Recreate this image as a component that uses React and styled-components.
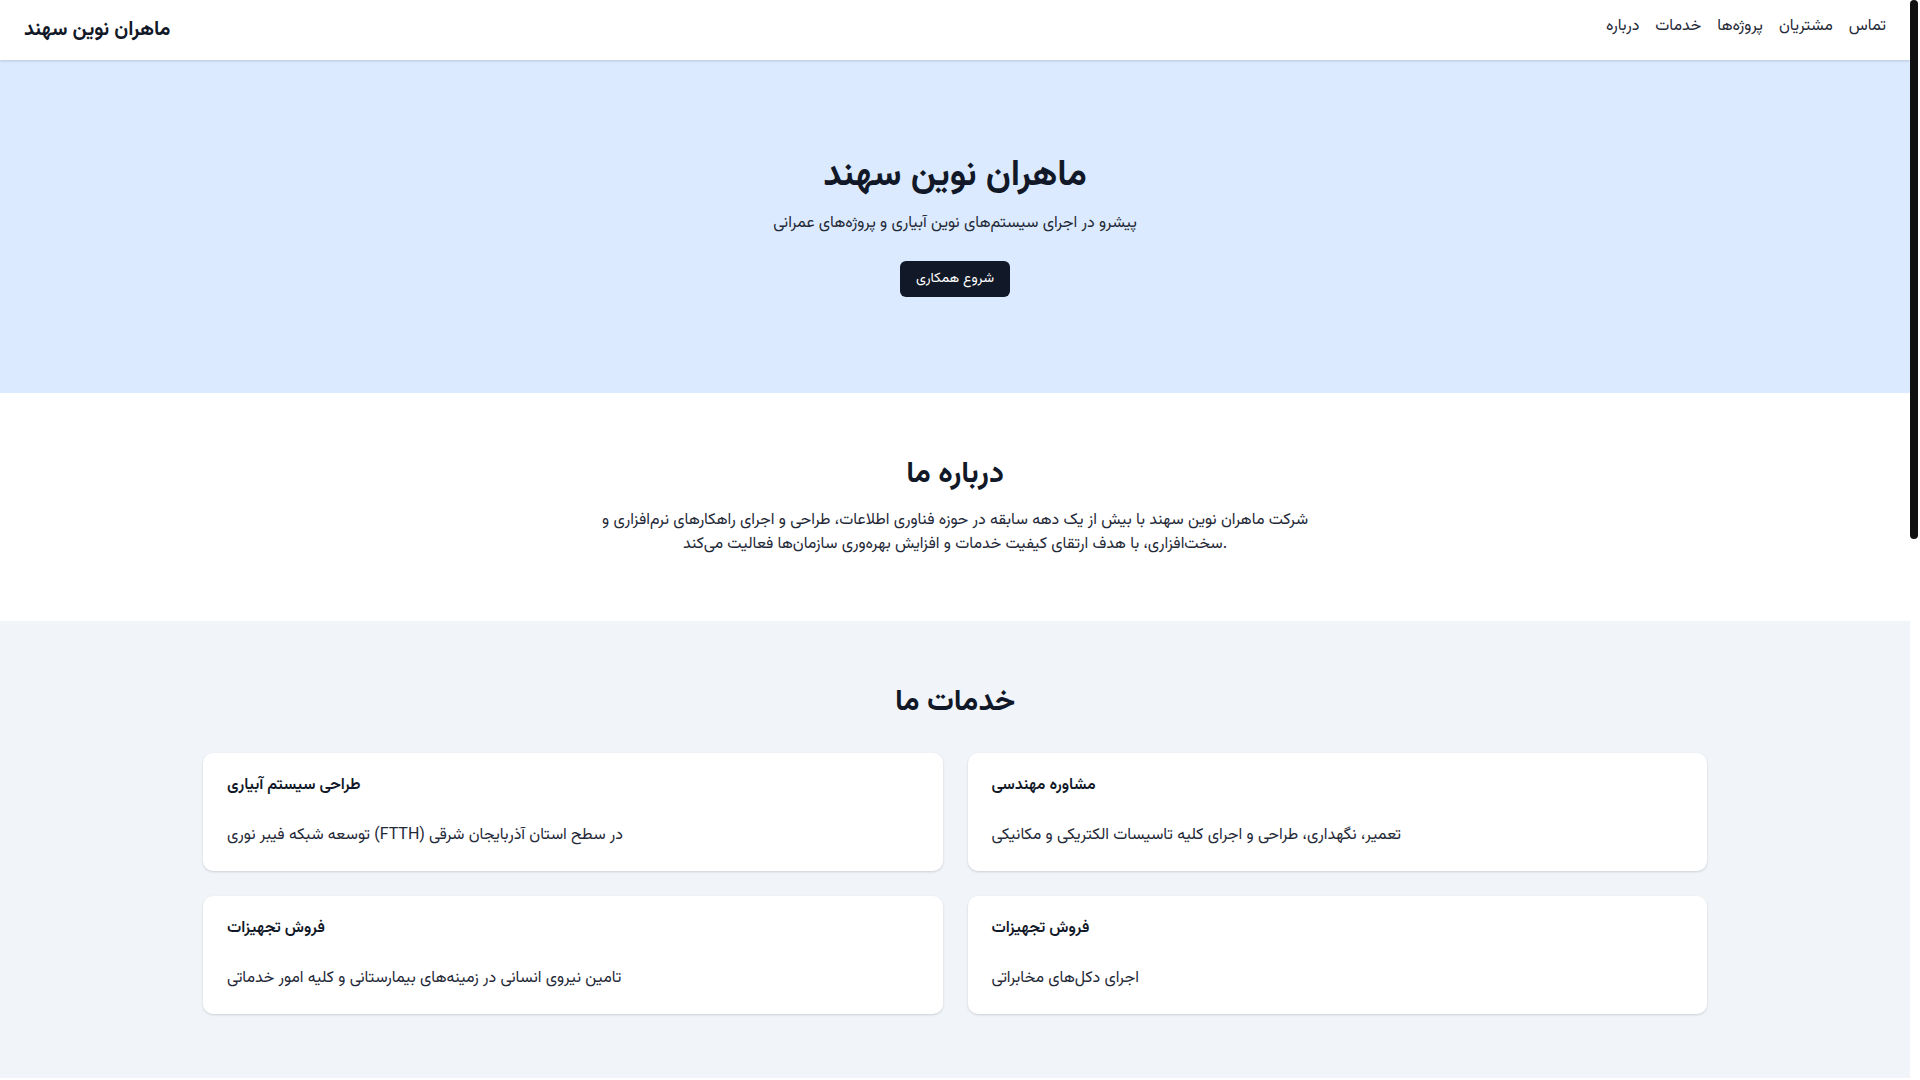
import React from "react";
import styled, { createGlobalStyle } from "styled-components";

const GlobalStyle = createGlobalStyle`
  * {
    box-sizing: border-box;
  }
  body {
    margin: 0;
    font-family: "Vazirmatn", "Noto Sans", sans-serif;
    color: #111827;
    background: #ffffff;
  }
  h1, h2, h3, p {
    margin: 0;
  }
`;

// room for the scrollbar on the right, like the browser keeps
const Page = styled.div`
  min-height: 100vh;
  margin-right: 10px;
`;

const ScrollThumb = styled.div`
  position: fixed;
  top: 0;
  right: 2px;
  width: 8px;
  height: 539px;
  border-radius: 4px;
  background: #111111;
  z-index: 10;
`;

const NavBar = styled.nav`
  height: 60px;
  padding: 0 24px;
  display: flex;
  align-items: center;
  justify-content: space-between;
  background: #ffffff;
  box-shadow: 0 1px 3px rgba(0, 0, 0, 0.1), 0 1px 2px rgba(0, 0, 0, 0.06);
  position: relative;
  z-index: 2;
`;

const Logo = styled.div`
  font-size: 20px;
  line-height: 28px;
  font-weight: 700;
`;

const NavLinks = styled.div`
  display: flex;
  gap: 16px;
  padding-bottom: 6px;
`;

const NavLink = styled.a`
  font-size: 16px;
  line-height: 24px;
  color: #1f2937;
  text-decoration: none;
`;

const Hero = styled.section`
  background: #dbeafe;
  padding: 96px 24px;
  text-align: center;
`;

const HeroTitle = styled.h1`
  font-size: 36px;
  line-height: 40px;
  font-weight: 700;
  margin-bottom: 14px;
`;

const HeroSub = styled.p`
  font-size: 16px;
  line-height: 28px;
  color: #1f2937;
  margin-bottom: 23px;
`;

const Button = styled.button`
  height: 36px;
  padding: 0 16px;
  border: none;
  border-radius: 6px;
  background: #111827;
  color: #ffffff;
  font-family: inherit;
  font-size: 14px;
  cursor: pointer;
`;

const Section = styled.section`
  background: ${(p) => (p.$tint ? "#f1f5f9" : "#ffffff")};
  padding: 64px 16px;
  text-align: center;
`;

const SectionTitle = styled.h2`
  font-size: 30px;
  line-height: 36px;
  font-weight: 700;
  margin-bottom: ${(p) => p.$gap || 16}px;
`;

const AboutText = styled.p`
  max-width: 768px;
  margin: 0 auto;
  font-size: 16px;
  line-height: 24px;
  color: #1f2937;
`;

const Container = styled.div`
  max-width: 1504px;
  margin: 0 auto;
`;

const CardGrid = styled.div`
  display: grid;
  grid-template-columns: repeat(${(p) => p.$cols || 2}, 1fr);
  gap: 25px;
  text-align: left;
`;

const Card = styled.div`
  background: #ffffff;
  border-radius: 10px;
  padding: 21px 24px 23px;
  box-shadow: 0 1px 3px rgba(0, 0, 0, 0.1), 0 1px 2px rgba(0, 0, 0, 0.06);
`;

const CardTitle = styled.h3`
  font-size: 16px;
  line-height: 24px;
  font-weight: 600;
  margin-bottom: 26px;
`;

const CardText = styled.p`
  font-size: 16px;
  line-height: 24px;
  color: #1f2937;
`;

const ClientRow = styled.div`
  display: flex;
  justify-content: center;
  gap: 48px;
  flex-wrap: wrap;
`;

const Client = styled.div`
  width: 200px;
  height: 80px;
  border-radius: 10px;
  background: #ffffff;
  display: flex;
  align-items: center;
  justify-content: center;
  font-size: 16px;
  color: #374151;
  box-shadow: 0 1px 3px rgba(0, 0, 0, 0.1);
`;

const ContactList = styled.div`
  display: flex;
  flex-direction: column;
  gap: 8px;
  font-size: 16px;
  line-height: 24px;
  color: #1f2937;
`;

const Footer = styled.footer`
  background: #111827;
  color: #e5e7eb;
  text-align: center;
  padding: 24px;
  font-size: 14px;
`;

const links = ["درباره", "خدمات", "پروژه‌ها", "مشتریان", "تماس"];

const services = [
  {
    title: "طراحی سیستم آبیاری",
    text: "توسعه شبکه فیبر نوری (FTTH) در سطح استان آذربایجان شرقی",
  },
  {
    title: "مشاوره مهندسی",
    text: "تعمیر، نگهداری، طراحی و اجرای کلیه تاسیسات الکتریکی و مکانیکی",
  },
  {
    title: "فروش تجهیزات",
    text: "تامین نیروی انسانی در زمینه‌های بیمارستانی و کلیه امور خدماتی",
  },
  {
    title: "فروش تجهیزات",
    text: "اجرای دکل‌های مخابراتی",
  },
];

const projects = [
  { title: "پروژه آبیاری قطره‌ای", text: "اجرای سیستم آبیاری نوین در مزارع استان" },
  { title: "پروژه فیبر نوری", text: "توسعه شبکه فیبر نوری در سطح شهر تبریز" },
  { title: "پروژه عمرانی", text: "احداث و بهسازی تاسیسات شهری" },
];

const clients = ["شرکت آب منطقه‌ای", "شرکت مخابرات", "دانشگاه علوم پزشکی", "شهرداری تبریز"];

export default function App() {
  return (
    <Page>
      <GlobalStyle />
      <ScrollThumb />
      <NavBar>
        <Logo>ماهران نوین سهند</Logo>
        <NavLinks>
          {links.map((l) => (
            <NavLink key={l} href="#">
              {l}
            </NavLink>
          ))}
        </NavLinks>
      </NavBar>

      <Hero>
        <HeroTitle>ماهران نوین سهند</HeroTitle>
        <HeroSub>پیشرو در اجرای سیستم‌های نوین آبیاری و پروژه‌های عمرانی</HeroSub>
        <Button>شروع همکاری</Button>
      </Hero>

      <Section>
        <SectionTitle>درباره ما</SectionTitle>
        <AboutText>
          شرکت ماهران نوین سهند با بیش از یک دهه سابقه در حوزه فناوری اطلاعات، طراحی و اجرای
          راهکارهای نرم‌افزاری و سخت‌افزاری، با هدف ارتقای کیفیت خدمات و افزایش بهره‌وری سازمان‌ها
          فعالیت می‌کند.
        </AboutText>
      </Section>

      <Section $tint>
        <SectionTitle $gap={32}>خدمات ما</SectionTitle>
        <Container>
          <CardGrid>
            {services.map((s, i) => (
              <Card key={i}>
                <CardTitle>{s.title}</CardTitle>
                <CardText>{s.text}</CardText>
              </Card>
            ))}
          </CardGrid>
        </Container>
      </Section>

      <Section>
        <SectionTitle $gap={32}>پروژه‌ها</SectionTitle>
        <Container>
          <CardGrid $cols={3}>
            {projects.map((p) => (
              <Card key={p.title}>
                <CardTitle>{p.title}</CardTitle>
                <CardText>{p.text}</CardText>
              </Card>
            ))}
          </CardGrid>
        </Container>
      </Section>

      <Section $tint>
        <SectionTitle $gap={32}>مشتریان</SectionTitle>
        <ClientRow>
          {clients.map((c) => (
            <Client key={c}>{c}</Client>
          ))}
        </ClientRow>
      </Section>

      <Section>
        <SectionTitle $gap={24}>تماس</SectionTitle>
        <ContactList>
          <span>تبریز، آذربایجان شرقی</span>
          <span>info@mahrannovin.ir</span>
          <span>۰۴۱-۳۳۰۰۰۰۰۰</span>
        </ContactList>
      </Section>

      <Footer>© ماهران نوین سهند</Footer>
    </Page>
  );
}
